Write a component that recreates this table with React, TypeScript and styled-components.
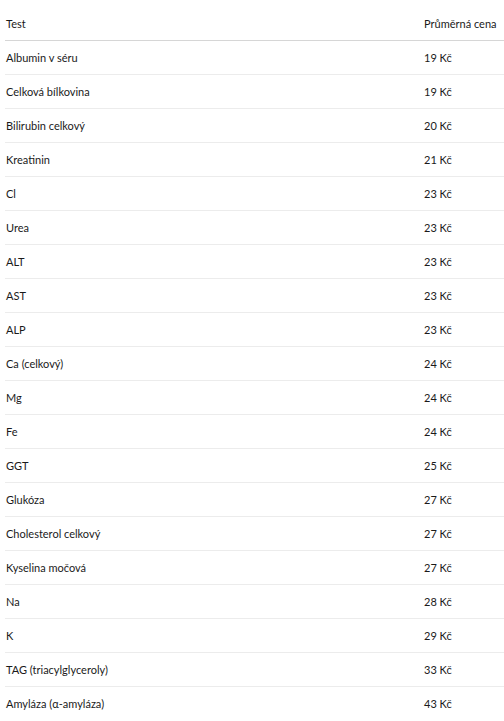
import React from 'react'
import styled, { createGlobalStyle } from 'styled-components'

const GlobalStyle = createGlobalStyle`
  html, body {
    margin: 0;
    padding: 0;
    background: #fff;
  }
  body {
    font-family: Lato, "Noto Sans", Arial, sans-serif;
    color: #1a1a1a;
    overflow: hidden;
  }
`

const Wrapper = styled.div`
  padding: 7px 0 0 5px;
  width: 520px;
`

const Table = styled.div`
  display: grid;
  grid-template-columns: 418px 1fr;
`

const HeadCell = styled.div`
  height: 33px;
  display: flex;
  align-items: center;
  padding-left: 1px;
  font-size: 11px;
  border-bottom: 1px solid #d6d6d6;
`

const Cell = styled.div<{ $last?: boolean }>`
  height: 33px;
  display: flex;
  align-items: center;
  padding-left: 1px;
  font-size: 11px;
  border-bottom: 1px solid ${(p) => (p.$last ? 'transparent' : '#ececec')};
`

const rows: [string, number][] = [
  ['Albumin v séru', 19],
  ['Celková bílkovina', 19],
  ['Bilirubin celkový', 20],
  ['Kreatinin', 21],
  ['Cl', 23],
  ['Urea', 23],
  ['ALT', 23],
  ['AST', 23],
  ['ALP', 23],
  ['Ca (celkový)', 24],
  ['Mg', 24],
  ['Fe', 24],
  ['GGT', 25],
  ['Glukóza', 27],
  ['Cholesterol celkový', 27],
  ['Kyselina močová', 27],
  ['Na', 28],
  ['K', 29],
  ['TAG (triacylglyceroly)', 33],
  ['Amyláza (α-amyláza)', 43],
]

export default function App() {
  return (
    <>
      <GlobalStyle />
      <Wrapper>
        <Table>
          <HeadCell>Test</HeadCell>
          <HeadCell>Průměrná cena</HeadCell>
          {rows.map(([name, price], i) => {
            const last = i === rows.length - 1
            return (
              <React.Fragment key={name}>
                <Cell $last={last}>{name}</Cell>
                <Cell $last={last}>{price} Kč</Cell>
              </React.Fragment>
            )
          })}
        </Table>
      </Wrapper>
    </>
  )
}
